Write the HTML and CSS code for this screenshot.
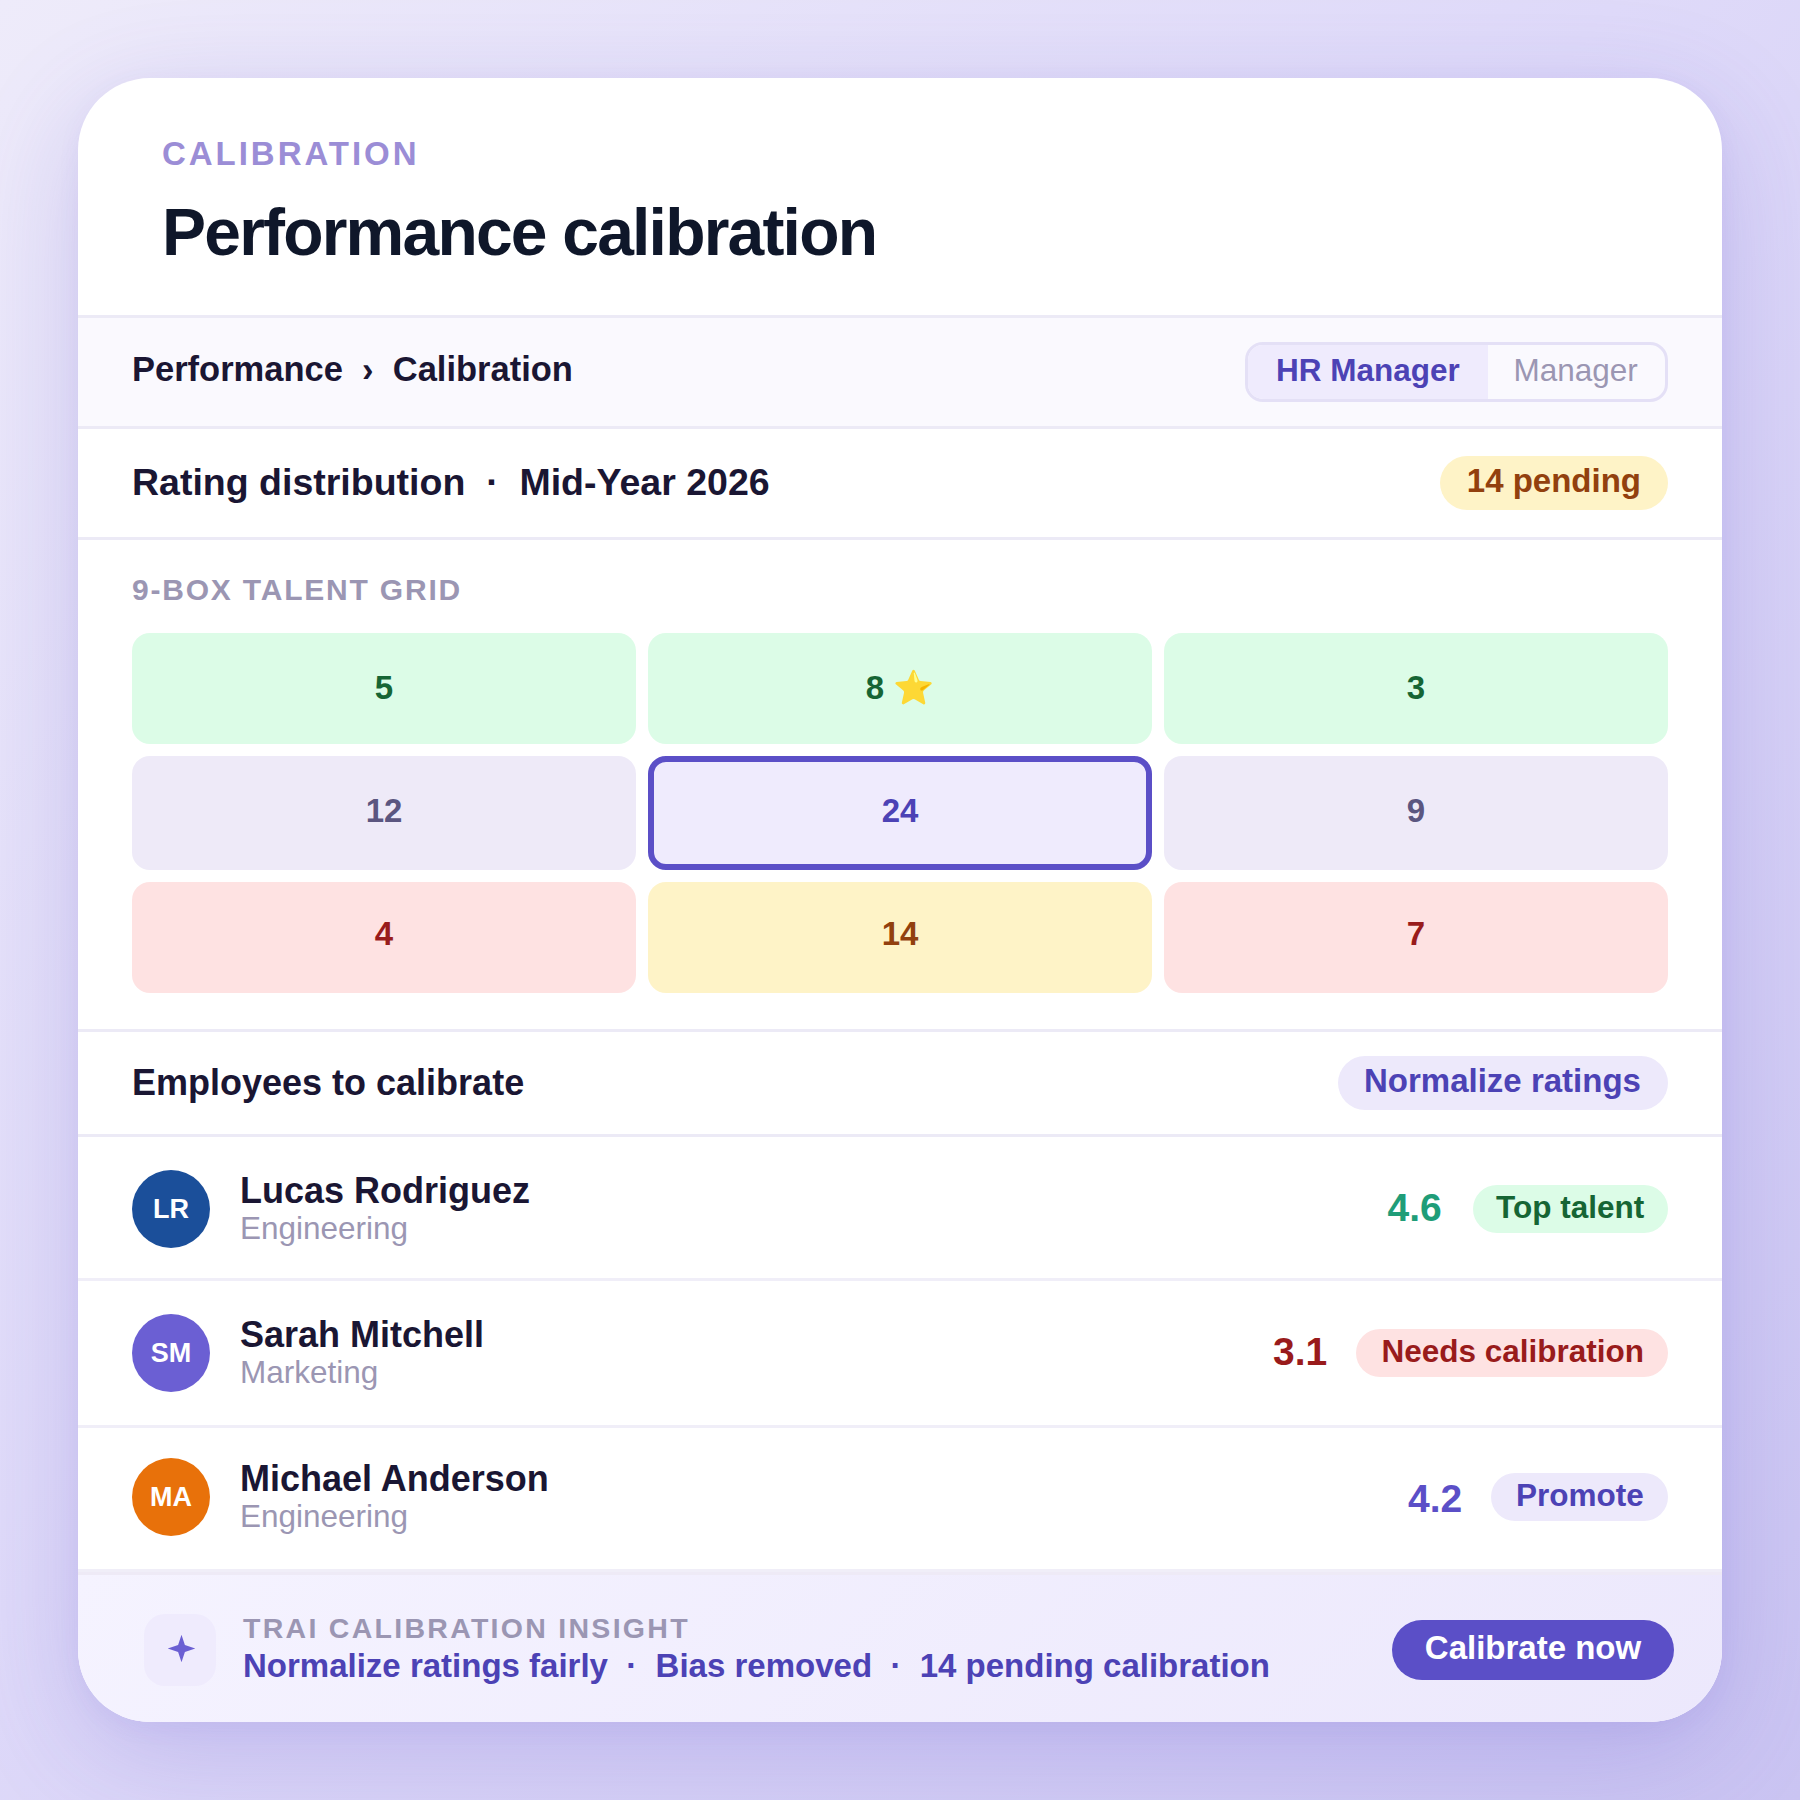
FILE: index.html
```html
<!DOCTYPE html>
<html lang="en">
<head>
<meta charset="utf-8">
<title>Performance calibration</title>
<link rel="stylesheet" href="styles.css">
</head>
<body>
<main class="card">
  <header class="header">
    <div class="eyebrow">CALIBRATION</div>
    <h1 class="title">Performance calibration</h1>
  </header>

  <nav class="crumbs">
    <div class="crumb-text">Performance&nbsp; ›&nbsp; Calibration</div>
    <div class="toggle">
      <span class="toggle-item active">HR Manager</span>
      <span class="toggle-item">Manager</span>
    </div>
  </nav>

  <section class="cycle">
    <div class="cycle-title">Rating distribution&nbsp; ·&nbsp; Mid-Year 2026</div>
    <span class="pill amber">14 pending</span>
  </section>

  <section class="talent">
    <div class="talent-label">9-BOX TALENT GRID</div>
    <div class="grid">
      <div class="cell green">5</div>
      <div class="cell green">8 ⭐</div>
      <div class="cell green">3</div>
      <div class="cell gray">12</div>
      <div class="cell selected">24</div>
      <div class="cell gray">9</div>
      <div class="cell red low">4</div>
      <div class="cell amber low">14</div>
      <div class="cell red low">7</div>
    </div>
  </section>

  <section class="list-head">
    <div class="list-title">Employees to calibrate</div>
    <span class="pill violet pill-action">Normalize ratings</span>
  </section>

  <article class="person first">
    <div class="avatar blue">LR</div>
    <div class="who">
      <div class="name">Lucas Rodriguez</div>
      <div class="dept">Engineering</div>
    </div>
    <div class="score teal">4.6</div>
    <span class="tag green tag-top">Top talent</span>
  </article>
  <article class="person tall">
    <div class="avatar purple">SM</div>
    <div class="who">
      <div class="name">Sarah Mitchell</div>
      <div class="dept">Marketing</div>
    </div>
    <div class="score crimson">3.1</div>
    <span class="tag red tag-needs">Needs calibration</span>
  </article>
  <article class="person last">
    <div class="avatar orange">MA</div>
    <div class="who">
      <div class="name">Michael Anderson</div>
      <div class="dept">Engineering</div>
    </div>
    <div class="score indigo">4.2</div>
    <span class="tag violet tag-promote">Promote</span>
  </article>

  <footer class="insight">
    <div class="spark">
      <svg width="29" height="29" viewBox="-14.5 -14.5 29 29" aria-hidden="true">
        <path d="M0-13.8L3.4-3.4L13.8 0L3.4 3.4L0 13.8L-3.4 3.4L-13.8 0L-3.4-3.4Z" fill="#6b5fd3"/>
      </svg>
    </div>
    <div class="insight-text">
      <div class="insight-label">TRAI CALIBRATION INSIGHT</div>
      <div class="insight-line">Normalize ratings fairly&nbsp; ·&nbsp; Bias removed&nbsp; ·&nbsp; 14 pending calibration</div>
    </div>
    <button class="cta" type="button">Calibrate now</button>
  </footer>
</main>
</body>
</html>
```
FILE: styles.css
```css
* {
  box-sizing: border-box;
}

body {
  margin: 0;
  width: 1800px;
  height: 1800px;
  padding: 78px;
  overflow: hidden;
  font-family: "Liberation Sans", Arial, sans-serif;
  font-weight: 700;
  color: #1a1633;
  white-space: nowrap;
  background: linear-gradient(135deg, #eeebfa 0%, #dfdaf9 45%, #cac4f2 100%);
}

.card {
  display: flex;
  flex-direction: column;
  width: 1644px;
  height: 1644px;
  border-radius: 72px;
  overflow: hidden;
  background: #fff;
  box-shadow: 0 30px 108px rgba(91, 78, 199, 0.22), 0 6px 24px rgba(91, 78, 199, 0.05);
}

.header {
  height: 240px;
  padding: 58px 84px 0;
  border-bottom: 3px solid #eceaf6;
}

.eyebrow {
  font-size: 33px;
  line-height: 36px;
  letter-spacing: 2.97px;
  color: #9b8dd6;
}

.title {
  margin: 23px 0 0;
  font-size: 66px;
  line-height: 75px;
  letter-spacing: -1.8px;
  color: #0f172a;
}

.crumbs,
.cycle,
.list-head {
  display: flex;
  align-items: center;
  justify-content: space-between;
  padding: 0 54px;
  border-bottom: 3px solid #eceaf6;
}

.crumbs {
  height: 111px;
  background: #faf9fe;
}

.crumb-text {
  font-size: 34.5px;
  line-height: 42px;
  padding-bottom: 6px;
}

.toggle {
  display: flex;
  width: 423px;
  height: 60px;
  border: 3px solid #e4e0f6;
  border-radius: 18px;
  overflow: hidden;
  font-size: 31.5px;
  line-height: 50px;
}

.toggle-item {
  width: 177px;
  padding-left: 25.5px;
  font-weight: 400;
  color: #9b96b3;
}

.toggle-item.active {
  width: 240px;
  padding-left: 28px;
  font-weight: 700;
  color: #4c42b5;
  background: #efebfd;
}

.cycle {
  height: 111px;
}

.cycle-title {
  padding-bottom: 2px;
  font-size: 37.5px;
  line-height: 42px;
}

.pill {
  height: 54px;
  padding: 0 27px;
  border-radius: 27px;
  font-size: 33px;
  line-height: 50px;
}

.pill-action {
  width: 330px;
  padding: 0 26px;
}

.green {
  background: #dcfce7;
  color: #166534;
}

.gray {
  background: #eeeaf8;
  color: #5b5680;
}

.red {
  background: #fee2e2;
  color: #991b1b;
}

.amber {
  background: #fef3c7;
  color: #92400e;
}

.violet {
  background: #ede9fb;
  color: #4c42b5;
}

.talent {
  height: 492px;
  padding: 33px 54px 0;
  border-bottom: 3px solid #eceaf6;
}

.talent-label {
  font-size: 30px;
  line-height: 33px;
  letter-spacing: 1.8px;
  color: #9b96b3;
}

.grid {
  display: grid;
  grid-template-columns: repeat(3, 504px);
  grid-template-rows: 111px 114px 111px;
  gap: 12px;
  margin-top: 27px;
}

.cell {
  display: flex;
  align-items: center;
  justify-content: center;
  padding-bottom: 2px;
  border-radius: 18px;
  font-size: 33px;
  line-height: 36px;
}

.cell.low {
  padding-bottom: 7px;
}

.cell.gray {
  padding-bottom: 4px;
}

.cell.selected {
  border: 6px solid #5b4fc7;
  padding-bottom: 4px;
  background: #efebfd;
  color: #4c42b5;
}

.list-head {
  height: 105px;
}

.list-title {
  font-size: 36px;
  line-height: 42px;
}

.person {
  display: flex;
  align-items: center;
  height: 144px;
  padding: 0 54px;
  border-bottom: 3px solid #f0eef8;
}

.person.first {
  padding-top: 3px;
}

.person.tall {
  height: 147px;
}

.person.last {
  padding-bottom: 3px;
}

.avatar {
  width: 78px;
  height: 78px;
  margin-right: 30px;
  border-radius: 50%;
  font-size: 27px;
  line-height: 78px;
  text-align: center;
  color: #fff;
}

.blue {
  background: #1b4f9a;
}

.purple {
  background: #6b5fd3;
}

.orange {
  background: #e8710a;
}

.who {
  flex: 1;
  padding-bottom: 1px;
}

.name {
  font-size: 36px;
  line-height: 39px;
}

.dept {
  font-size: 31.5px;
  line-height: 36px;
  font-weight: 400;
  color: #9b96b3;
}

.score {
  width: 53px;
  padding-bottom: 2px;
  font-size: 39px;
  line-height: 48px;
}

.last .score {
  padding: 4px 0 0;
}

.teal {
  color: #1f9d78;
}

.crimson {
  color: #991b1b;
}

.indigo {
  color: #5b4fc7;
}

.tag {
  height: 48px;
  margin-left: 30px;
  padding-left: 25px;
  border-radius: 24px;
  font-size: 31.5px;
  line-height: 44px;
}

.tag-top {
  width: 195px;
  margin-left: 32.5px;
  padding-left: 23px;
}

.tag-needs {
  width: 312px;
  padding-left: 25.5px;
}

.tag-promote {
  width: 177px;
}

.insight {
  display: flex;
  align-items: center;
  height: 150px;
  padding: 3px 48px 0 66px;
  border-top: 3px solid #eeeaf6;
  background: linear-gradient(135deg, #f5f3ff, #ece8fc);
}

.spark {
  display: flex;
  width: 72px;
  height: 72px;
  padding: 20px 0 0 23px;
  margin-right: 27px;
  border-radius: 21px;
  background: #efebfd;
}

.insight-text {
  flex: 1;
  padding-bottom: 2px;
}

.insight-label {
  font-size: 28.5px;
  line-height: 33px;
  letter-spacing: 2.28px;
  color: #9b96b3;
}

.insight-line {
  font-size: 33px;
  line-height: 42px;
  color: #4c42b5;
}

.cta {
  width: 282px;
  height: 60px;
  padding: 0 0 5px;
  border: 0;
  border-radius: 30px;
  font: inherit;
  font-size: 33px;
  color: #fff;
  background: #5b4fc7;
}
```
